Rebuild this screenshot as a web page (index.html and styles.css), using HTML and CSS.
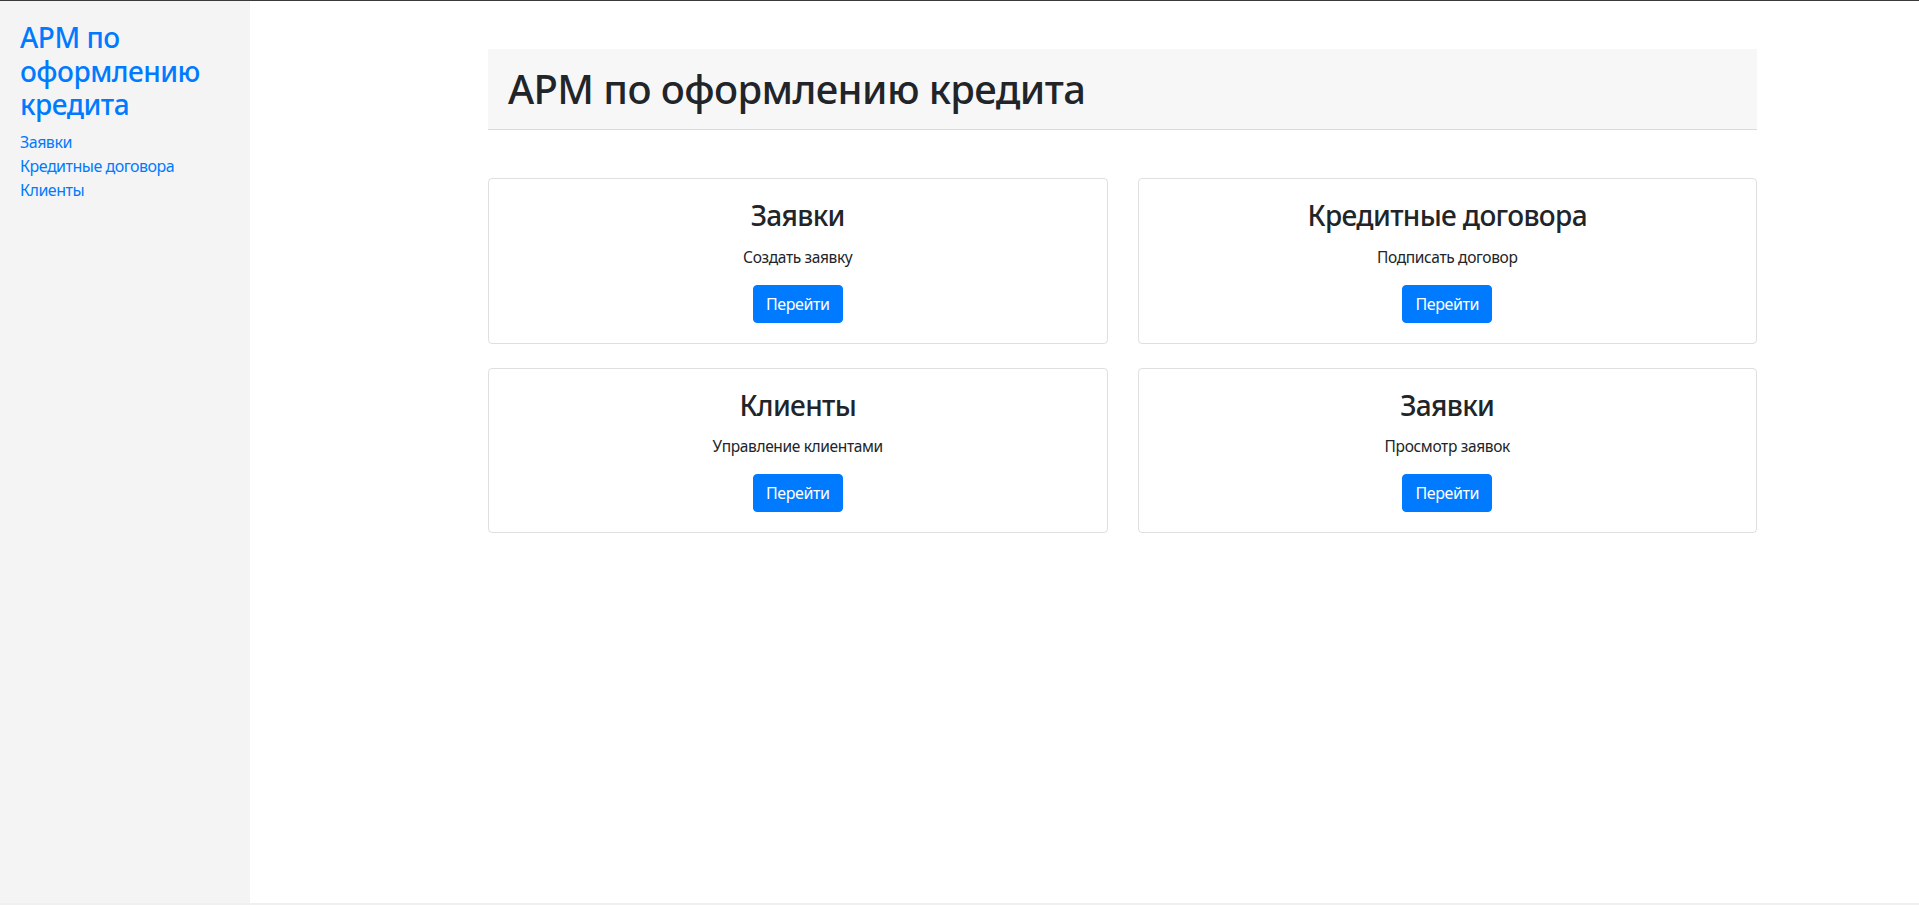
FILE: index.html
```html
<!DOCTYPE html>
<html lang="ru">
<head>
<meta charset="utf-8">
<title>АРМ по оформлению кредита</title>
<link rel="stylesheet" href="styles.css">
</head>
<body>
<div class="app">
  <aside class="sidebar">
    <h3 class="brand">АРМ по оформлению кредита</h3>
    <nav class="nav">
      <a href="#">Заявки</a>
      <a href="#">Кредитные договора</a>
      <a href="#">Клиенты</a>
    </nav>
  </aside>
  <main class="main">
    <header class="page-header">
      <h1>АРМ по оформлению кредита</h1>
    </header>
    <section class="cards">
      <div class="card">
        <h3 class="card-title">Заявки</h3>
        <p class="card-text">Создать заявку</p>
        <a class="btn" href="#">Перейти</a>
      </div>
      <div class="card">
        <h3 class="card-title">Кредитные договора</h3>
        <p class="card-text">Подписать договор</p>
        <a class="btn" href="#">Перейти</a>
      </div>
      <div class="card">
        <h3 class="card-title">Клиенты</h3>
        <p class="card-text">Управление клиентами</p>
        <a class="btn" href="#">Перейти</a>
      </div>
      <div class="card">
        <h3 class="card-title">Заявки</h3>
        <p class="card-text">Просмотр заявок</p>
        <a class="btn" href="#">Перейти</a>
      </div>
    </section>
  </main>
</div>
</body>
</html>
```

FILE: styles.css
```css
html {
  background: #f0f0f0;
}
body {
  margin: 0;
  font-family: "Noto Sans", "Open Sans", sans-serif;
  font-size: 16px;
  line-height: 1.5;
  letter-spacing: -0.5px;
  color: #212529;
}
.app {
  display: flex;
  height: 903px;
  box-sizing: border-box;
  border-top: 1px solid #3a3a3a;
  background: #fff;
}
.sidebar {
  width: 250px;
  flex: none;
  box-sizing: border-box;
  background: #f4f4f4;
  padding: 20px 20px;
}
.brand {
  margin: 0 0 8px;
  font-size: 28px;
  line-height: 1.2;
  font-weight: 500;
  letter-spacing: -0.5px;
  color: #007bff;
}
.nav {
  display: flex;
  flex-direction: column;
}
.nav a {
  color: #007bff;
  text-decoration: none;
  line-height: 24px;
}
.main {
  padding: 48px 0 0 238px;
  width: 1269px;
  flex: none;
}
.page-header {
  background: #f7f7f7;
  border-bottom: 1px solid #dadada;
  padding: 16px 20px;
  margin-bottom: 48px;
}
.page-header h1 {
  margin: 0;
  font-size: 40px;
  line-height: 1.2;
  font-weight: 500;
  letter-spacing: -0.6px;
}
.cards {
  display: grid;
  grid-template-columns: 1fr 1fr;
  column-gap: 30px;
  row-gap: 24px;
}
.card {
  border: 1px solid rgba(0, 0, 0, 0.125);
  border-radius: 4px;
  padding: 20px;
  text-align: center;
}
.card-title {
  margin: 0 0 12px;
  font-size: 28px;
  line-height: 1.2;
  font-weight: 500;
  letter-spacing: -0.65px;
}
.card-text {
  margin: 0 0 16px;
  font-size: 15.5px;
  line-height: 24px;
  letter-spacing: -0.35px;
}
.btn {
  display: inline-block;
  background: #007bff;
  border: 1px solid #007bff;
  color: #fff;
  text-decoration: none;
  padding: 6px 12px;
  border-radius: 4px;
  font-size: 16px;
  line-height: 24px;
  letter-spacing: -0.4px;
}
```
